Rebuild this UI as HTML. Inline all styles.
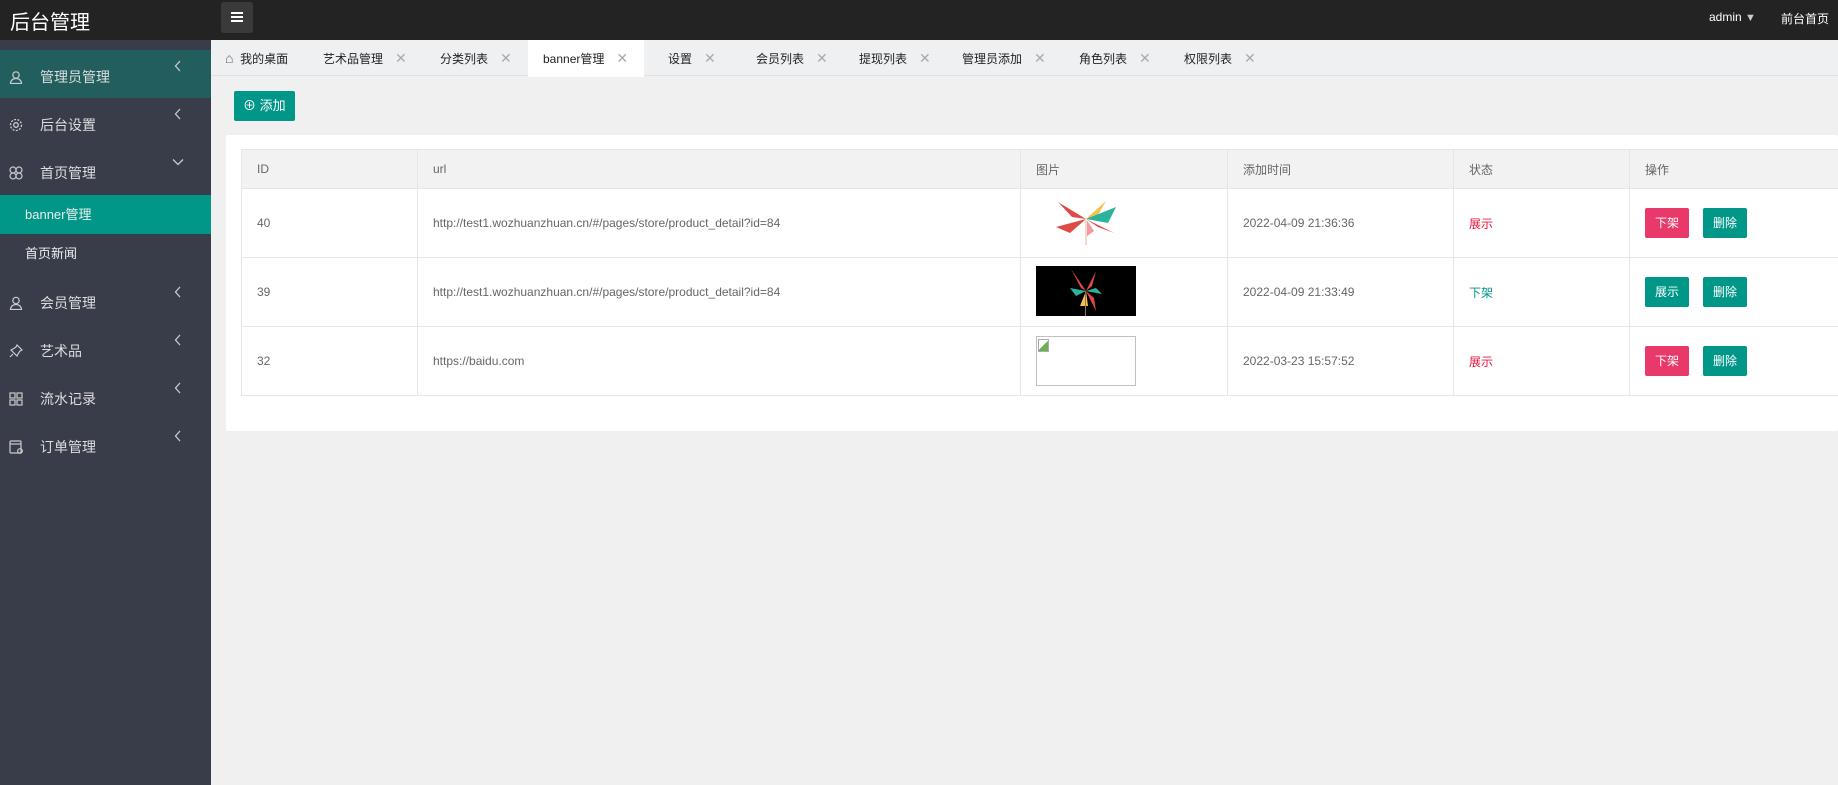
<!DOCTYPE html>
<html><head><meta charset="utf-8">
<style>
*{margin:0;padding:0;box-sizing:border-box}
body{width:1838px;height:785px;overflow:hidden;background:#f0f0f0;font-family:"Liberation Sans","Noto Sans CJK SC",sans-serif;position:relative}
.top{position:absolute;left:0;top:0;width:1838px;height:40px;background:#232323}
.logo{position:absolute;left:10px;top:6px;color:#fff;font-size:20px}
.menu{position:absolute;left:221px;top:2px;width:32px;height:31px;background:#3a3a3a;border-radius:3px}
.menu i{position:absolute;left:10px;width:12px;height:2px;background:#fff}
.tr{position:absolute;top:10px;color:#fff;font-size:12px}
.side{position:absolute;left:0;top:40px;width:211px;height:745px;background:#393d49}
.it{position:absolute;left:0;width:211px;height:48px;color:#ddd;font-size:14px;line-height:48px}
.it .t{position:absolute;left:40px;top:3px}
.it .ic{position:absolute;left:9px;top:20px;width:14px;height:14px}
.it .ar{position:absolute;left:174px;top:10px;width:8px;height:12px}
.sub{position:absolute;left:0;width:211px;height:39px;line-height:39px;color:#eee;font-size:13px;padding-left:25px}
.tabs{position:absolute;left:211px;top:40px;width:1627px;height:36px;background:#eff0f2;border-bottom:1px solid #e2e2e2}
.tab{position:absolute;top:0;height:36px;line-height:36px;font-size:12px;color:#222}
.tab .x{color:#aaa;margin-left:12px;font-size:14px}
.act{background:#fff;height:37px}
.add{position:absolute;left:234px;top:91px;width:61px;height:30px;background:#009688;color:#fff;font-size:13px;line-height:30px;border-radius:2px;padding-left:9px}
.panel{position:absolute;left:226px;top:135px;width:1612px;height:296px;background:#fff;border-radius:2px}
table{position:absolute;left:241px;top:149px;width:1640px;border-collapse:collapse;font-size:12px;color:#666}
td,th{border:1px solid #e6e6e6;text-align:left;font-weight:normal;padding-left:15px}
th{height:39px;background:#f2f2f2}
td{height:69px}
.btn{display:inline-block;width:44px;height:30px;line-height:30px;text-align:center;color:#fff;font-size:12px;border-radius:2px;margin-right:14px}
.r{background:#e8396a}.g{background:#009688}
</style></head><body>
<div class="top">
 <div class="logo">后台管理</div>
 <div class="menu"><i style="top:10px"></i><i style="top:14px"></i><i style="top:18px"></i></div>
 <div class="tr" style="left:1709px">admin <span style="font-size:11px;color:#ccc">▼</span></div>
 <div class="tr" style="left:1781px">前台首页</div>
</div>
<div class="side">
 <div class="it" style="top:10px;background:#225e5e"><svg class="ic" viewBox="0 0 14 14" fill="none" stroke="#ccc" stroke-width="1.2"><circle cx="7" cy="5" r="3.2"/><path d="M1.5 13.5c0-3 2.5-5 5.5-5s5.5 2 5.5 5z"/></svg><span class="t">管理员管理</span><svg class="ar" viewBox="0 0 8 12" fill="none" stroke="#ccc" stroke-width="1.3"><path d="M6 1L1.5 6 6 11"/></svg></div>
 <div class="it" style="top:58px"><svg class="ic" viewBox="0 0 14 14" fill="none" stroke="#ccc" stroke-width="1.3"><circle cx="7" cy="7" r="2.3"/><circle cx="7" cy="7" r="5.5" stroke-dasharray="2 1.4"/></svg><span class="t">后台设置</span><svg class="ar" viewBox="0 0 8 12" fill="none" stroke="#ccc" stroke-width="1.3"><path d="M6 1L1.5 6 6 11"/></svg></div>
 <div class="it" style="top:106px"><svg class="ic" viewBox="0 0 14 14" fill="none" stroke="#ccc" stroke-width="1.2"><circle cx="4" cy="4" r="3"/><circle cx="10" cy="4" r="3"/><circle cx="4" cy="10" r="3"/><circle cx="10" cy="10" r="3"/></svg><span class="t">首页管理</span><svg class="ar" style="left:172px;top:12px;width:12px;height:8px" viewBox="0 0 12 8" fill="none" stroke="#ccc" stroke-width="1.3"><path d="M1 1.5L6 6.5 11 1.5"/></svg></div>
 <div class="sub" style="top:155px;background:#009688">banner管理</div>
 <div class="sub" style="top:194px">首页新闻</div>
 <div class="it" style="top:236px"><svg class="ic" viewBox="0 0 14 14" fill="none" stroke="#ccc" stroke-width="1.2"><circle cx="7" cy="4.5" r="3.2"/><path d="M1.5 13.5c0-3 2.5-5 5.5-5s5.5 2 5.5 5z"/></svg><span class="t">会员管理</span><svg class="ar" viewBox="0 0 8 12" fill="none" stroke="#ccc" stroke-width="1.3"><path d="M6 1L1.5 6 6 11"/></svg></div>
 <div class="it" style="top:284px"><svg class="ic" viewBox="0 0 14 14" fill="none" stroke="#ccc" stroke-width="1.2"><path d="M8 1l5 5-2 1-2 3-1 2-6-6 2-1 3-2zM4 10l-3 3"/></svg><span class="t">艺术品</span><svg class="ar" viewBox="0 0 8 12" fill="none" stroke="#ccc" stroke-width="1.3"><path d="M6 1L1.5 6 6 11"/></svg></div>
 <div class="it" style="top:332px"><svg class="ic" viewBox="0 0 14 14" fill="none" stroke="#ccc" stroke-width="1.2"><rect x="1" y="1" width="5" height="5"/><rect x="8" y="1" width="5" height="5"/><rect x="1" y="8" width="5" height="5"/><rect x="8" y="8" width="5" height="5"/></svg><span class="t">流水记录</span><svg class="ar" viewBox="0 0 8 12" fill="none" stroke="#ccc" stroke-width="1.3"><path d="M6 1L1.5 6 6 11"/></svg></div>
 <div class="it" style="top:380px"><svg class="ic" viewBox="0 0 14 14" fill="none" stroke="#ccc" stroke-width="1.2"><rect x="1" y="1" width="11" height="12" rx="1"/><path d="M1 4h11"/><circle cx="11" cy="11" r="2.3"/></svg><span class="t">订单管理</span><svg class="ar" viewBox="0 0 8 12" fill="none" stroke="#ccc" stroke-width="1.3"><path d="M6 1L1.5 6 6 11"/></svg></div>
</div>
<div class="tabs">
 <div class="tab" style="left:14px"><span style="color:#666;font-size:14px">⌂</span>&nbsp; 我的桌面</div>
 <div class="tab" style="left:112px">艺术品管理<span class="x">✕</span></div>
 <div class="tab" style="left:229px">分类列表<span class="x">✕</span></div>
 <div class="tab act" style="left:317px;width:116px;padding-left:15px">banner管理<span class="x">✕</span></div>
 <div class="tab" style="left:457px">设置<span class="x">✕</span></div>
 <div class="tab" style="left:545px">会员列表<span class="x">✕</span></div>
 <div class="tab" style="left:648px">提现列表<span class="x">✕</span></div>
 <div class="tab" style="left:751px">管理员添加<span class="x">✕</span></div>
 <div class="tab" style="left:868px">角色列表<span class="x">✕</span></div>
 <div class="tab" style="left:973px">权限列表<span class="x">✕</span></div>
</div>
<div class="add">⊕ 添加</div>
<div class="panel"></div>
<table>
 <tr><th style="width:176px">ID</th><th style="width:603px">url</th><th style="width:207px">图片</th><th style="width:226px">添加时间</th><th style="width:176px">状态</th><th>操作</th></tr>
 <tr><td>40</td><td>http://test1.wozhuanzhuan.cn/#/pages/store/product_detail?id=84</td><td><svg width="100" height="50" viewBox="0 0 100 50"><polygon points="50,22 22,5 36,20" fill="#e04a45"/><polygon points="50,22 70,4 62,18" fill="#f5c24a"/><polygon points="50,22 80,10 72,26" fill="#2bb3a0"/><polygon points="50,22 78,36 62,30" fill="#e04a45"/><polygon points="50,22 20,30 34,36" fill="#e04a45"/><polygon points="50,22 58,34 50,40" fill="#f29aa0"/><rect x="49" y="22" width="2" height="26" fill="#f4d8cc"/></svg></td><td>2022-04-09 21:36:36</td><td style="color:#e8143c">展示</td><td><span class="btn r">下架</span><span class="btn g">删除</span></td></tr>
 <tr><td>39</td><td>http://test1.wozhuanzhuan.cn/#/pages/store/product_detail?id=84</td><td><svg width="100" height="50" viewBox="0 0 100 50"><rect width="100" height="50" fill="#000"/><polygon points="50,25 35,3 45,22" fill="#e04a45"/><polygon points="50,25 60,5 56,20" fill="#e04a45"/><polygon points="50,25 34,22 40,30" fill="#2bb3a0"/><polygon points="50,25 66,28 60,22" fill="#2bb3a0"/><polygon points="50,25 44,40 52,40" fill="#f5c24a"/><polygon points="50,25 60,45 58,32" fill="#e04a45"/><rect x="49" y="25" width="1" height="25" fill="#a07050"/></svg></td><td>2022-04-09 21:33:49</td><td style="color:#009688">下架</td><td><span class="btn g">展示</span><span class="btn g">删除</span></td></tr>
 <tr><td>32</td><td>https://baidu.com</td><td><div style="width:100px;height:50px;border:1px solid #c0c0c0;position:relative"><div style="position:absolute;left:1px;top:2px;width:11px;height:13px;border:1px solid #aab;background:linear-gradient(135deg,#fff 50%,#6ab04c 50%)"></div></div></td><td>2022-03-23 15:57:52</td><td style="color:#e8143c">展示</td><td><span class="btn r">下架</span><span class="btn g">删除</span></td></tr>
</table>
</body></html>
